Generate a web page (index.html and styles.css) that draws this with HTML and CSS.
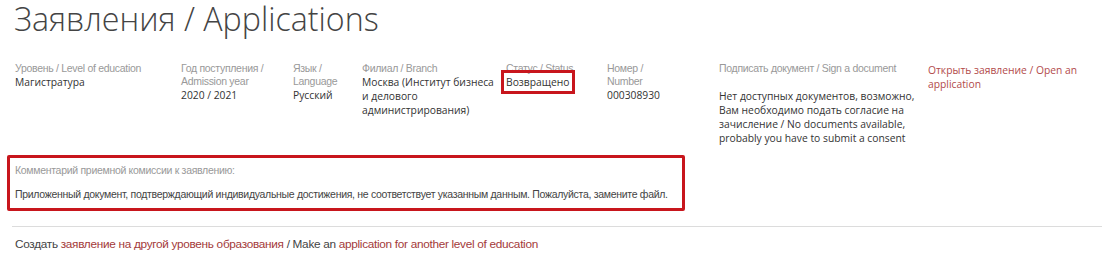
FILE: index.html
```html
<!DOCTYPE html>
<html lang="ru">
<head>
<meta charset="utf-8">
<title>Заявления / Applications</title>
<link rel="stylesheet" href="styles.css">
</head>
<body>
<div class="page">
  <h1 class="title">Заявления / Applications</h1>
  <div class="app-row">
    <div class="cell">
      <div class="label">Уровень / Level of education</div>
      <div class="value">Магистратура</div>
    </div>
    <div class="cell">
      <div class="label">Год поступления /<br>Admission year</div>
      <div class="value">2020 / 2021</div>
    </div>
    <div class="cell">
      <div class="label">Язык /<br>Language</div>
      <div class="value">Русский</div>
    </div>
    <div class="cell">
      <div class="label">Филиал / Branch</div>
      <div class="value">Москва (Институт бизнеса и делового администрирования)</div>
    </div>
    <div class="cell">
      <div class="label">Статус / Status</div>
      <div class="value"><span class="status">Возвращено</span></div>
    </div>
    <div class="cell">
      <div class="label">Номер /<br>Number</div>
      <div class="value">000308930</div>
    </div>
    <div class="cell">
      <div class="label">Подписать документ / Sign a document</div>
      <div class="value sign">Нет доступных документов, возможно, Вам необходимо подать согласие на зачисление / No documents available, probably you have to submit a consent</div>
    </div>
    <div class="cell">
      <a class="open-link" href="#">Открыть заявление / Open an application</a>
    </div>
  </div>
  <div class="comment">
    <div class="comment-label">Комментарий приемной комиссии к заявлению:</div>
    <div class="comment-text">Приложенный документ, подтверждающий индивидуальные достижения, не соответствует указанным данным. Пожалуйста, замените файл.</div>
  </div>
  <div class="divider"></div>
  <div class="create">Создать <a href="#">заявление на другой уровень образования</a> / Make an <a href="#">application for another level of education</a></div>
</div>
</body>
</html>
```

FILE: styles.css
```css
html, body {
  margin: 0;
  padding: 0;
  background: #fff;
}
.page {
  padding: 0 2px 0 7px;
  font-family: "Open Sans", sans-serif;
  color: #333;
}
.title {
  margin: 0;
  padding: 0 0 0 7px;
  font-family: "Open Sans", sans-serif;
  font-weight: 300;
  font-size: 32.2px;
  line-height: 38px;
  color: #444;
}
.app-row {
  display: grid;
  grid-template-columns: 166px 112px 69px 144px 101px 112px 209px 1fr;
  padding: 24px 0 0 8px;
  height: 93px;
}
.label {
  font-family: "Liberation Sans", Arial, sans-serif;
  font-size: 10.5px;
  line-height: 13px;
  color: #999;
  letter-spacing: -0.3px;
}
.value {
  font-size: 10.3px;
  line-height: 14px;
  color: #333;
  padding-right: 8px;
}
.value.sign {
  margin-top: 14px;
}
.status {
  display: inline-block;
  outline: 3px solid #c8161d;
  outline-offset: 2px;
}
.open-link {
  font-size: 10.3px;
  line-height: 14px;
  color: #b24a4a;
  text-decoration: none;
  display: block;
  padding-top: 1px;
}
.comment {
  width: 662px;
  border: 3px solid #c8161d;
  border-radius: 2px;
  padding: 6px 5px 7px 5px;
  font-family: "Liberation Sans", Arial, sans-serif;
  font-size: 10.5px;
  letter-spacing: -0.3px;
  white-space: nowrap;
}
.comment-label {
  color: #999;
  line-height: 13px;
}
.comment-text {
  color: #444;
  margin-top: 11px;
  line-height: 13px;
}
.divider {
  margin: 15px 0 0 5px;
  border-top: 1px solid #dcdcdc;
}
.create {
  padding: 10px 0 0 8px;
  font-family: "Liberation Sans", Arial, sans-serif;
  font-size: 11.8px;
  letter-spacing: -0.3px;
  color: #444;
}
.create a {
  color: #a33a3a;
  text-decoration: none;
}
```
